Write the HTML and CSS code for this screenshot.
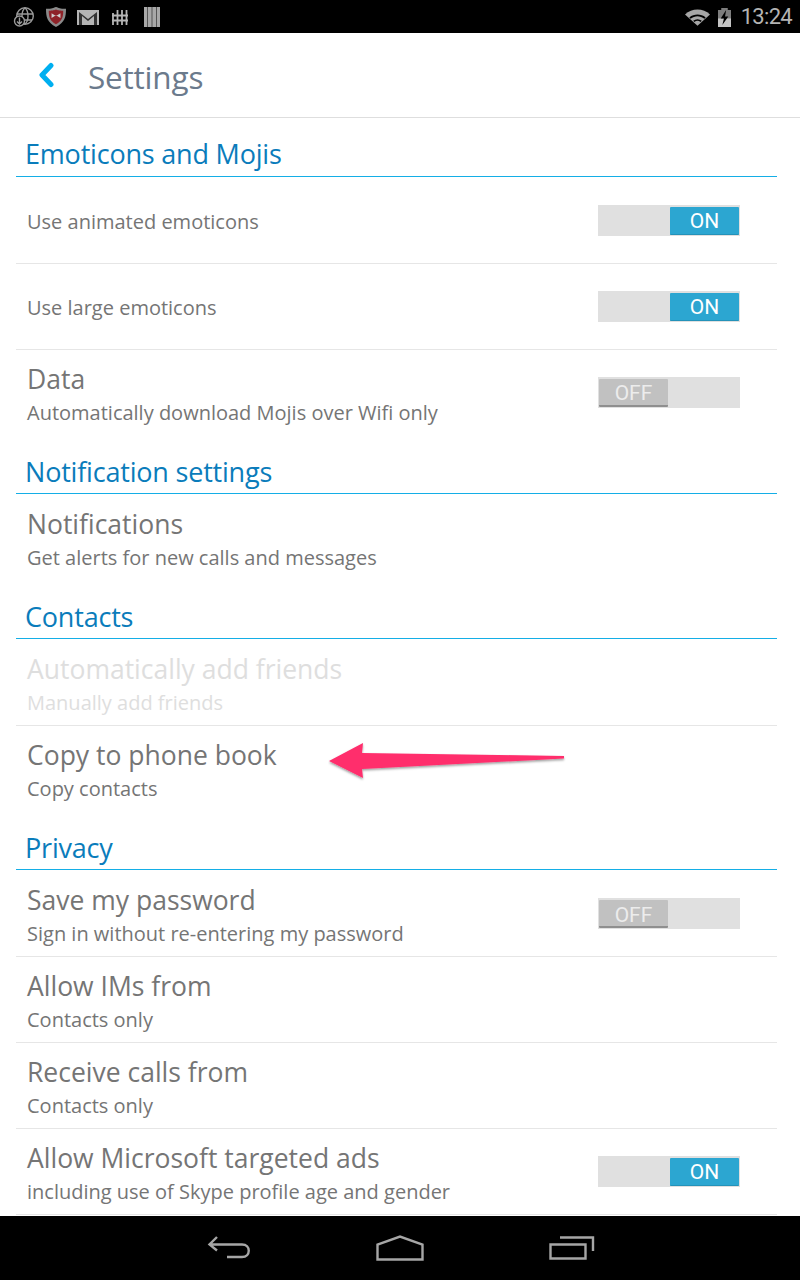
FILE: index.html
```html
<!DOCTYPE html>
<html lang="en">
<head>
<meta charset="utf-8">
<title>Settings</title>
<link rel="stylesheet" href="styles.css">
</head>
<body>
<div class="phone">
  <div class="status">
    <div class="status-icons">
      <svg width="22" height="20" viewBox="0 0 22 20" fill="none" stroke="#9a9a9a" stroke-width="1.400"><circle cx="12" cy="9" r="8.300"/><path d="M12 1c-4 3-4 13 0 16M12 1c4 3 4 13 0 16M4 7h16M5 13h14"/><circle cx="6.500" cy="14" r="5" fill="#000"/><path d="M6.500 10.500v6M4 14.500l2.500 2.500L9 14.500"/></svg>
      <svg width="20" height="20" viewBox="2 1 18 22" preserveAspectRatio="none"><path d="M2 3c6 0 6-1 9-2 3 1 3 2 9 2 0 9-1 15-9 20C3 18 2 12 2 3z" fill="#8a8a8a"/><path d="M4.500 5c4 0 5-.5 6.500-1.300C12.500 4.500 13.500 5 17.500 5c0 7-1 11-6.500 15C5.500 16 4.500 12 4.500 5z" fill="#8e2228"/><path d="M7 13V8l4 3 4-3v5l-4-3z" fill="#cfcfcf"/></svg>
      <svg width="22" height="15" viewBox="0 0 22 15"><path d="M0 0h22v15H0z" fill="#b5b5b5"/><path d="M2 2v13h3V6l6 5 6-5v9h3V2l-9 7z" fill="#333"/></svg>
      <svg class="icon-grid" width="16" height="15" viewBox="0 0 16 15" fill="none" stroke="#b5b5b5" stroke-width="1.800"><path d="M1 3v12M5.500 0v15M10 0v15M14.500 0v15M0 5.500h16M0 10.500h16"/></svg>
      <svg class="icon-bars" width="16" height="20" viewBox="0 0 16 20"><path d="M0 0h16v20H0z" fill="#a8a8a8"/><path d="M3.500 0v20M8 0v20M12.500 0v20" stroke="#555" stroke-width="1"/></svg>
    </div>
    <div class="status-right">
      <svg width="25" height="17" viewBox="0 0 26 17"><path d="M0 5.500C7-1.500 19-1.500 26 5.500L13 17z" fill="#a6a6a6"/><path d="M4.500 8.500c5-4 12-4 17 0l-1.300 1.200c-4.500-3.500-10-3.500-14.400 0zM8.500 12c3-2.300 6-2.300 9 0l-1.300 1.200c-2.300-1.600-4.300-1.600-6.400 0z" fill="#000"/></svg>
      <svg width="13" height="19" viewBox="0 0 12 20" preserveAspectRatio="none"><path d="M3 0h6v2h3v18H0V2h3z" fill="#7d7d7d"/><path d="M0 11h12v9H0z" fill="#c4c4c4"/><path d="M7.500 2 2.500 11h3L4 18l5.500-9h-3z" fill="#000"/></svg>
      <span class="clock">13:24</span>
    </div>
  </div>

  <header class="appbar">
    <svg class="back" width="18" height="26" viewBox="0 0 18 26"><path d="M14 3.500 5 13l9 9.500" fill="none" stroke="#00aff0" stroke-width="5" stroke-linecap="round" stroke-linejoin="round"/></svg>
    <h1 class="title">Settings</h1>
  </header>

  <main class="content">
    <section class="group">
      <h2 class="heading">Emoticons and Mojis</h2>
      <div class="row row-single">
        <div class="text"><div class="sub">Use animated emoticons</div></div>
        <div class="toggle on"><span class="knob">ON</span></div>
      </div>
      <div class="row row-single">
        <div class="text"><div class="sub">Use large emoticons</div></div>
        <div class="toggle on"><span class="knob">ON</span></div>
      </div>
      <div class="row last">
        <div class="text"><div class="name">Data</div><div class="sub">Automatically download Mojis over Wifi only</div></div>
        <div class="toggle off"><span class="knob">OFF</span></div>
      </div>
    </section>

    <section class="group">
      <h2 class="heading">Notification settings</h2>
      <div class="row last">
        <div class="text"><div class="name">Notifications</div><div class="sub">Get alerts for new calls and messages</div></div>
      </div>
    </section>

    <section class="group">
      <h2 class="heading">Contacts</h2>
      <div class="row disabled">
        <div class="text"><div class="name">Automatically add friends</div><div class="sub">Manually add friends</div></div>
      </div>
      <div class="row last">
        <div class="text"><div class="name">Copy to phone book</div><div class="sub">Copy contacts</div></div>
      </div>
    </section>

    <section class="group">
      <h2 class="heading">Privacy</h2>
      <div class="row">
        <div class="text"><div class="name">Save my password</div><div class="sub">Sign in without re-entering my password</div></div>
        <div class="toggle off"><span class="knob">OFF</span></div>
      </div>
      <div class="row">
        <div class="text"><div class="name">Allow IMs from</div><div class="sub">Contacts only</div></div>
      </div>
      <div class="row">
        <div class="text"><div class="name">Receive calls from</div><div class="sub">Contacts only</div></div>
      </div>
      <div class="row">
        <div class="text"><div class="name">Allow Microsoft targeted ads</div><div class="sub">including use of Skype profile age and gender</div></div>
        <div class="toggle on"><span class="knob">ON</span></div>
      </div>
    </section>
  </main>

  <nav class="navbar">
    <svg width="44" height="26" viewBox="0 0 44 26" fill="none" stroke="#a6a6a6" stroke-width="2.400"><path d="M10 2 2.500 9.500 10 15.500M3 9.500h32c9 0 9 12.500 0 12.500H20"/></svg>
    <svg width="48" height="26" viewBox="0 0 48 26" fill="none" stroke="#a6a6a6" stroke-width="2.400"><path d="M1.500 24.500v-15L24 1.500l22.500 8v15z"/></svg>
    <svg width="46" height="24" viewBox="0 0 46 24" fill="none" stroke="#a6a6a6" stroke-width="2.400"><path d="M11 1.500h33V15"/><path d="M1.500 8.500h35v14h-35z"/></svg>
  </nav>

  <svg class="arrow" width="240" height="44" viewBox="0 0 240 44">
    <defs><filter id="sh" x="-10%" y="-30%" width="120%" height="170%"><feDropShadow dx="0" dy="1.500" stdDeviation="1.200" flood-color="#000" flood-opacity=".4"/></filter></defs>
    <path d="M1 21 35 3l-1 10 202 3v2.500L34 29l1 9z" fill="#ff2d6c" filter="url(#sh)"/>
  </svg>
</div>
</body>
</html>
```
FILE: styles.css
```css
* { box-sizing: border-box; }
html, body { margin: 0; padding: 0; }
body { background: #fff; font-family: "Open Sans", "Noto Sans", sans-serif; }
.phone { position: relative; width: 800px; height: 1280px; overflow: hidden; display: flex; flex-direction: column; background: #fff; }

.status { height: 33px; background: #000; display: flex; justify-content: space-between; align-items: center; padding: 1px 8px 0 13px; flex: none; }
.status-icons { display: flex; align-items: center; gap: 11px; }
.icon-grid { margin-left: 2px; }
.icon-bars { margin-left: 5px; }
.status-right { display: flex; align-items: center; gap: 8px; }
.clock { color: #b4b4b4; font-family: Roboto, sans-serif; font-size: 22px; line-height: 1; margin-left: 2px; letter-spacing: -.7px; }

.appbar { height: 85px; flex: none; display: flex; align-items: center; padding: 4px 0 0 37px; gap: 33px; border-bottom: 1px solid #dedede; }
.back { margin-top: -4px; }
.title { margin: 0; font-size: 31.5px; font-weight: 400; color: #6b7a8c; line-height: 1; letter-spacing: -.2px; }

.content { flex: 1; padding: 0 23px 0 16px; min-height: 0; }
.group { display: block; }
.heading { margin: 0 0 1px; height: 60px; padding: 21px 0 0 9px; font-size: 27px; line-height: 34px; font-weight: 400; color: #0a7cbb; border-bottom: 1px solid #14aee6; letter-spacing: -.2px; }
.group:first-child .heading { height: 59px; padding-top: 19px; }

.row { height: 86px; display: flex; align-items: center; justify-content: space-between; padding: 0 37px 0 11px; border-bottom: 1px solid #e6e6e6; }
.row.last { border-bottom: 0; height: 84px; }
.name { font-size: 26.5px; line-height: 33px; color: #757575; }
.sub { font-size: 20px; line-height: 26px; color: #757575; }
.name + .sub { margin-top: 4px; }
.text { padding-top: 3px; }
.last .text { padding-top: 5px; }
.disabled .name, .disabled .sub { color: #dedede; }

.toggle { width: 142px; height: 31px; background: #e0e0e0; display: flex; padding: 2px 1px 1px; flex: none; }
.toggle.on { justify-content: flex-end; }
.knob { width: 69px; height: 28px; border-radius: 1px; display: flex; align-items: center; justify-content: center; font-family: Roboto, sans-serif; font-size: 21px; color: #fff; }
.on .knob { background: #2ca6d1; border-bottom: 1px solid #2492b9; padding-top: 1px; }
.off .knob { background: #c1c1c1; border-bottom: 2px solid #8f8f8f; color: #ececec; padding-top: 3px; }

.navbar { height: 64px; flex: none; background: #000; display: flex; justify-content: center; align-items: center; position: relative; padding-left: 1px; }
.navbar svg { flex: none; }
.navbar svg:nth-child(1) { margin-right: 125px; }
.navbar svg:nth-child(2) { margin-right: 125px; }

.arrow { position: absolute; left: 328px; top: 740px; }
```
